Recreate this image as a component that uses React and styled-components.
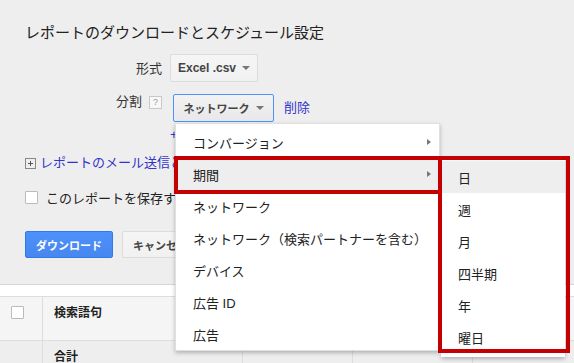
import React from "react";
import styled, { createGlobalStyle } from "styled-components";

const Global = createGlobalStyle`
  body {
    margin: 0;
    background: #fff;
    font-family: "Liberation Sans", "Noto Sans CJK JP", sans-serif;
  }
`;

const Page = styled.div`
  position: relative;
  width: 574px;
  height: 363px;
  overflow: hidden;
`;

const Panel = styled.div`
  background: #eeeeee;
  height: 262px;
  border-bottom: 1px solid #d5d5d5;
  padding: 22px 0 0 25px;
  display: flex;
  flex-direction: column;
`;

const Title = styled.div`
  font-size: 15px;
  line-height: 22px;
  color: #222;
`;

const Form = styled.div`
  margin-top: 10px;
  display: grid;
  grid-template-columns: 137px auto;
  column-gap: 8px;
  row-gap: 12px;
  justify-content: start;
`;

const Label = styled.div`
  font-size: 13px;
  line-height: 13px;
  color: #333;
  display: flex;
  justify-content: flex-end;
  align-items: ${(p) => (p.$top ? "flex-start" : "center")};
  gap: 7px;
  padding-top: ${(p) => (p.$top ? "1px" : "0")};
`;

const Help = styled.span`
  width: 11px;
  height: 11px;
  border: 1px solid #c8c8c8;
  background: #f8f8f8;
  color: #999;
  font-size: 9px;
  line-height: 11px;
  text-align: center;
  margin-top: 1px;
`;

const Field = styled.div`
  display: flex;
  align-items: center;
  gap: 10px;
`;

const Anchor = styled.div`
  position: relative;
  margin-left: ${(p) => p.$shift || 0}px;
`;

const SelectBtn = styled.div`
  height: 26px;
  width: ${(p) => p.$w}px;
  box-sizing: content-box;
  border: 1px solid ${(p) => (p.$focus ? "#4d90fe" : "#dcdcdc")};
  border-radius: 2px;
  background: ${(p) =>
    p.$focus
      ? "linear-gradient(#f3f3f3, #e8e8e8)"
      : "linear-gradient(#f5f5f5, #f1f1f1)"};
  color: #444;
  font-size: ${(p) => p.$fs || 11}px;
  font-weight: bold;
  display: flex;
  align-items: center;
  justify-content: center;
  gap: 6px;
`;

const Caret = styled.span`
  width: 0;
  height: 0;
  border-left: 4px solid transparent;
  border-right: 4px solid transparent;
  border-top: 4px solid #777;
`;

const Link = styled.span`
  color: #3333cc;
  font-size: 13px;
  line-height: 16px;
`;

const AddRow = styled.div`
  margin: 5px 0 0 145px;
  height: 16px;
  line-height: 16px;
  font-size: 13px;
  color: #3333cc;
  white-space: nowrap;
`;

const ExpandRow = styled.div`
  margin-top: 12px;
  height: 16px;
  display: flex;
  align-items: center;
  gap: 4px;
  white-space: nowrap;
`;

const PlusBox = styled.span`
  width: 9px;
  height: 9px;
  border: 1px solid #888;
  position: relative;
  &::before,
  &::after {
    content: "";
    position: absolute;
    background: #555;
  }
  &::before {
    left: 2px;
    right: 2px;
    top: 4px;
    height: 1px;
  }
  &::after {
    top: 2px;
    bottom: 2px;
    left: 4px;
    width: 1px;
  }
`;

const SaveRow = styled.div`
  margin-top: 18px;
  height: 16px;
  display: flex;
  align-items: center;
  gap: 8px;
  font-size: 13px;
  color: #222;
  white-space: nowrap;
`;

const Check = styled.span`
  display: block;
  width: 11px;
  height: 11px;
  border: 1px solid #bbb;
  border-radius: 1px;
  background: #fff;
  flex: none;
`;

const ButtonRow = styled.div`
  margin-top: 26px;
  display: flex;
  gap: 9px;
`;

const Button = styled.div`
  height: 25px;
  padding: 0 10px;
  border: 1px solid ${(p) => (p.$primary ? "#3079ed" : "#dcdcdc")};
  border-radius: 2px;
  background: ${(p) =>
    p.$primary ? "linear-gradient(#4d90fe, #4787ed)" : "linear-gradient(#f5f5f5, #f1f1f1)"};
  color: ${(p) => (p.$primary ? "#fff" : "#444")};
  font-size: 11px;
  font-weight: bold;
  display: flex;
  align-items: center;
  white-space: nowrap;
`;

const Gap = styled.div`
  height: 11px;
  border-bottom: 1px solid #ddd;
`;

const Row = styled.div`
  display: grid;
  grid-template-columns: 43px 200px 110px 120px 1fr;
  height: ${(p) => p.$h}px;
  background: ${(p) => p.$bg};
  border-bottom: 1px solid #ddd;
`;

const Cell = styled.div`
  border-right: 1px solid #ddd;
  padding: 8px 0 0 11px;
  font-size: 12px;
  line-height: 16px;
  font-weight: bold;
  color: #222;
  &:last-child {
    border-right: none;
  }
`;

const CheckCell = styled(Cell)`
  padding: 9px 0 0 11px;
`;

const Menu = styled.div`
  position: absolute;
  left: 2px;
  top: calc(100% + 1px);
  width: 265px;
  padding-top: 2px;
  background: #fff;
  box-shadow: 0 2px 4px rgba(0, 0, 0, 0.25);
  border: 1px solid rgba(0, 0, 0, 0.12);
  box-sizing: border-box;
  z-index: 5;
`;

const Item = styled.div`
  position: relative;
  height: 32px;
  padding-left: 17px;
  display: flex;
  align-items: center;
  font-size: 13px;
  color: #222;
  white-space: nowrap;
  background: ${(p) => (p.$active ? "#eeeeee" : "transparent")};
`;

const Arrow = styled.span`
  position: absolute;
  right: 8px;
  top: 13px;
  border-top: 3px solid transparent;
  border-bottom: 3px solid transparent;
  border-left: 4px solid #777;
`;

const SubMenu = styled.div`
  position: absolute;
  left: calc(100% + 2px);
  top: -1px;
  width: 124px;
  padding: 4px 0;
  background: #fff;
  box-shadow: 0 2px 4px rgba(0, 0, 0, 0.25);
  z-index: 6;
`;

const Mark = styled.div`
  position: absolute;
  left: ${(p) => p.$x}px;
  top: ${(p) => p.$y}px;
  width: ${(p) => p.$w}px;
  height: ${(p) => p.$h}px;
  box-sizing: border-box;
  border: 4px solid #c40000;
  z-index: 10;
  pointer-events: none;
`;

const items = [
  "コンバージョン",
  "期間",
  "ネットワーク",
  "ネットワーク（検索パートナーを含む）",
  "デバイス",
  "広告 ID",
  "広告",
];

const periods = ["日", "週", "月", "四半期", "年", "曜日"];

export default function App() {
  return (
    <Page>
      <Global />
      <Panel>
        <Title>レポートのダウンロードとスケジュール設定</Title>
        <Form>
          <Label>形式</Label>
          <Field>
            <Anchor>
              <SelectBtn $w={86} $fs={12}>
                Excel .csv <Caret />
              </SelectBtn>
            </Anchor>
          </Field>
          <Label $top>
            分割 <Help>?</Help>
          </Label>
          <Field>
            <Anchor $shift={3}>
              <SelectBtn $w={99} $focus>
                ネットワーク <Caret />
              </SelectBtn>
              <Menu>
                {items.map((t, i) => (
                  <Item key={t} $active={i === 1}>
                    {t}
                    {i < 2 && <Arrow />}
                    {i === 1 && (
                      <SubMenu>
                        {periods.map((p, j) => (
                          <Item key={p} $active={j === 0}>
                            {p}
                          </Item>
                        ))}
                      </SubMenu>
                    )}
                  </Item>
                ))}
              </Menu>
            </Anchor>
            <Link>削除</Link>
          </Field>
        </Form>
        <AddRow>+ 分割を追加</AddRow>
        <ExpandRow>
          <PlusBox />
          <Link>レポートのメール送信とスケジュール設定</Link>
        </ExpandRow>
        <SaveRow>
          <Check />
          このレポートを保存する
        </SaveRow>
        <ButtonRow>
          <Button $primary>ダウンロード</Button>
          <Button>キャンセル</Button>
        </ButtonRow>
      </Panel>
      <Gap />
      <Row $h={43} $bg="#f5f5f5">
        <CheckCell>
          <Check />
        </CheckCell>
        <Cell>検索語句</Cell>
        <Cell />
        <Cell />
        <Cell />
      </Row>
      <Row $h={40} $bg="#eeeeee">
        <Cell />
        <Cell>合計</Cell>
        <Cell />
        <Cell />
        <Cell />
      </Row>
      <Mark $x={174} $y={156} $w={268} $h={38} />
      <Mark $x={438} $y={156} $w={132} $h={197} />
    </Page>
  );
}
